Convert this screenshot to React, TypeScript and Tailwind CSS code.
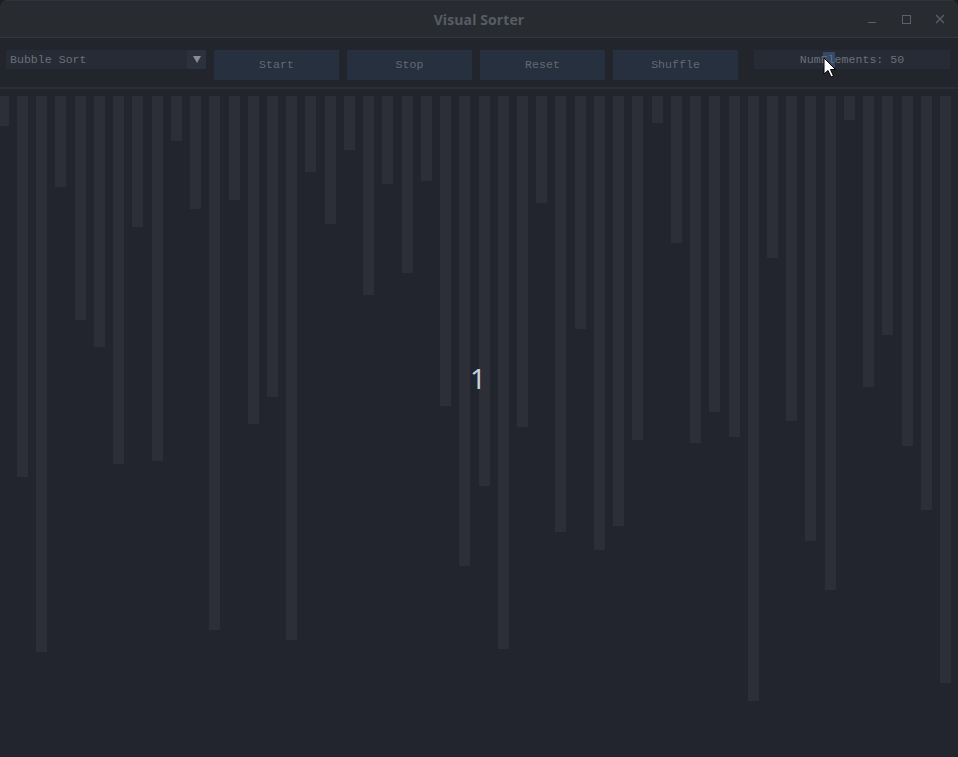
import React from "react";

const bottoms = [126,477,652,187,320,347,464,227,461,141,209,630,200,424,397,640,172,224,150,295,184,273,181,406,566,486,649,427,203,532,329,550,526,440,123,243,443,412,437,701,258,421,541,590,120,387,335,446,510,683];

export default function App() {
  const mono = { fontFamily: '"Liberation Mono", "DejaVu Sans Mono", monospace' };
  return (
    <div className="relative w-[958px] h-[757px] overflow-hidden bg-[#1c1e22]">
      <div className="flex flex-col w-[958px] h-[757px] bg-[#22252d] rounded-t-[7px] overflow-hidden">
        {/* Title bar */}
        <div className="relative flex items-center justify-center h-[38px] shrink-0 bg-[#282b30] border-t border-[#30333a] border-b border-b-[#32363d]">
          <span
            className="text-[14px] font-bold text-[#585c63] tracking-[0.1px]"
            style={{ fontFamily: '"Open Sans", "Noto Sans", sans-serif' }}
          >
            Visual Sorter
          </span>
          <div className="absolute right-0 top-0 h-full">
            <svg width="100" height="36" viewBox="858 0 100 36">
              <line x1="868" y1="21.5" x2="876" y2="21.5" stroke="#5b5f66" strokeWidth="1" />
              <rect x="902.5" y="14.5" width="8" height="8" fill="none" stroke="#5b5f66" strokeWidth="1" />
              <line x1="936" y1="14" x2="944" y2="22" stroke="#5b5f66" strokeWidth="1.2" />
              <line x1="944" y1="14" x2="936" y2="22" stroke="#5b5f66" strokeWidth="1.2" />
            </svg>
          </div>
        </div>

        {/* Toolbar */}
        <div className="flex items-start h-[49px] shrink-0 pt-[12px] pl-[6px] bg-[#22252c]" style={mono}>
          <div className="flex items-center w-[200px] h-[19px] bg-[#262b36]">
            <span className="flex-1 pl-[4px] text-[11.6px] leading-none text-[#6b7079]">Bubble Sort</span>
            <div className="flex items-center justify-center w-[19px] h-[19px] bg-[#2c323d]">
              <svg width="10" height="9" viewBox="0 0 10 9">
                <path d="M1 1 L9 1 L5 8 Z" fill="#888c93" />
              </svg>
            </div>
          </div>
          <div className="flex gap-[8px] ml-[8px]">
            {["Start", "Stop", "Reset", "Shuffle"].map((t) => (
              <div
                key={t}
                className="flex items-center justify-center w-[125px] h-[30px] bg-[#27303e] text-[11.6px] text-[#636974]"
              >
                {t}
              </div>
            ))}
          </div>
          <div className="relative flex items-center justify-center ml-[16px] w-[196px] h-[19px] bg-[#262b36]">
            <div className="absolute left-[69px] top-[2px] w-[12px] h-[15px] bg-[#354969]" />
            <span className="relative text-[11.6px] leading-none text-[#6b7079]">NumElements: 50</span>
          </div>
        </div>
        <div className="h-[2px] shrink-0 bg-[#2b2e36]" />
        <div className="h-[7px] shrink-0" />

        {/* Bars */}
        <div className="relative flex-1">
          <svg width="958" height="661" viewBox="0 0 958 661" shapeRendering="crispEdges">
            {bottoms.map((b, i) => (
              <rect
                key={i}
                x={Math.round(-2.2 + i * 19.23)}
                y={0}
                width={11}
                height={b - 96}
                fill="#2c2f38"
              />
            ))}
          </svg>
          <div
            className="absolute left-[478px] top-[282px] -translate-x-1/2 -translate-y-1/2 text-[28px] leading-none text-[#c9d1dc]"
            style={{ fontFamily: '"Noto Sans", "Open Sans", sans-serif' }}
          >
            1
          </div>
        </div>
      </div>

      {/* Mouse cursor */}
      <svg className="absolute left-[823px] top-[57px]" width="14" height="22" viewBox="0 0 14 22">
        <path
          d="M1 1 L1 17 L5 13.5 L8 20 L10.5 19 L7.5 12.5 L12.5 12.5 Z"
          fill="#ffffff"
          stroke="#000000"
          strokeWidth="1"
          strokeLinejoin="round"
        />
      </svg>
    </div>
  );
}
